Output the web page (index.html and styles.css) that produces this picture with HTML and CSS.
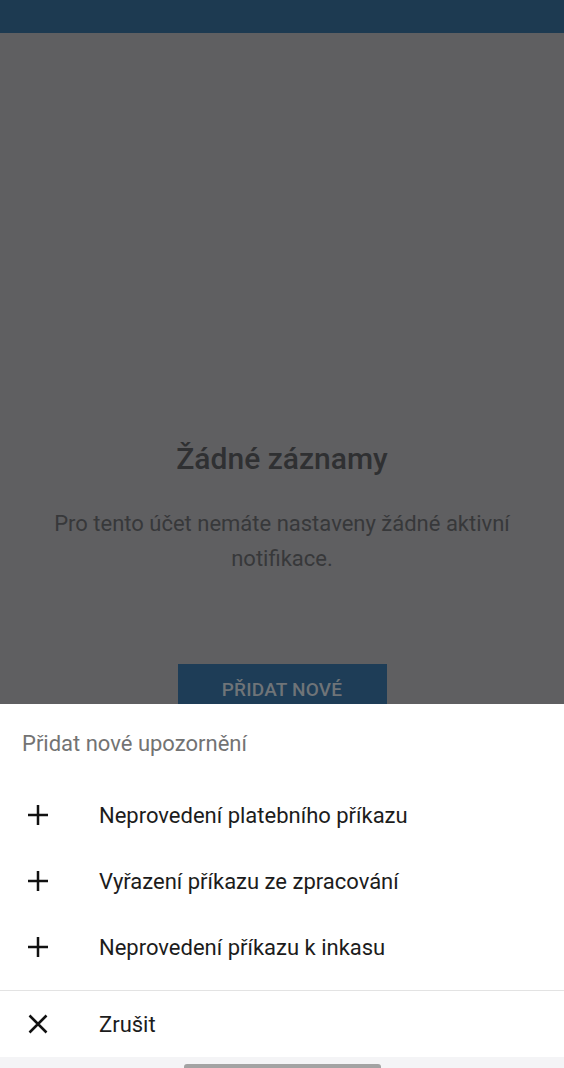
FILE: index.html
```html
<!DOCTYPE html>
<html lang="cs">
<head>
<meta charset="utf-8">
<title>Notifikace</title>
<link rel="stylesheet" href="styles.css">
</head>
<body>
<header class="appbar"></header>
<main class="empty">
  <h1 class="empty-title">Žádné záznamy</h1>
  <p class="empty-text">Pro tento účet nemáte nastaveny žádné aktivní notifikace.</p>
  <button class="add-btn">PŘIDAT NOVÉ</button>
</main>
<section class="sheet">
  <div class="sheet-title">Přidat nové upozornění</div>
  <ul class="sheet-list">
    <li class="sheet-item">
      <svg class="icon" viewBox="0 0 24 24"><path d="M12 2v20M2 12h20"/></svg>
      <span>Neprovedení platebního příkazu</span>
    </li>
    <li class="sheet-item">
      <svg class="icon" viewBox="0 0 24 24"><path d="M12 2v20M2 12h20"/></svg>
      <span>Vyřazení příkazu ze zpracování</span>
    </li>
    <li class="sheet-item">
      <svg class="icon" viewBox="0 0 24 24"><path d="M12 2v20M2 12h20"/></svg>
      <span>Neprovedení příkazu k inkasu</span>
    </li>
  </ul>
  <div class="sheet-cancel sheet-item">
    <svg class="icon" viewBox="0 0 24 24"><path d="M3.5 3.5l17 17M20.5 3.5l-17 17"/></svg>
    <span>Zrušit</span>
  </div>
  <div class="navbar"><div class="handle"></div></div>
</section>
</body>
</html>
```
FILE: styles.css
```css
* { box-sizing: border-box; }
html, body { margin: 0; padding: 0; }
body {
  width: 564px;
  height: 1068px;
  overflow: hidden;
  background: #5f5f61;
  font-family: Roboto, "Noto Sans", "Liberation Sans", sans-serif;
}
.appbar {
  height: 33px;
  background: #1d3a51;
}
.empty {
  display: flex;
  flex-direction: column;
  align-items: center;
  padding-top: 408px;
}
.empty-title {
  margin: 0;
  font-size: 30px;
  line-height: 36px;
  font-weight: 500;
  color: #2f3032;
}
.empty-text {
  margin: 29px 0 0;
  width: 500px;
  text-align: center;
  font-size: 22px;
  line-height: 35px;
  color: #37383a;
}
.add-btn {
  margin-top: 88px;
  width: 209px;
  height: 52px;
  border: 0;
  background: #1e3d57;
  color: #6f7478;
  font-family: inherit;
  font-size: 19px;
  font-weight: 500;
  letter-spacing: 0.2px;
  padding: 0 0 2px;
}
.sheet {
  position: fixed;
  left: 0;
  right: 0;
  top: 704px;
  bottom: 0;
  background: #ffffff;
  display: flex;
  flex-direction: column;
}
.sheet-title {
  height: 78px;
  display: flex;
  align-items: center;
  padding-left: 22px;
  font-size: 22px;
  color: #737373;
}
.sheet-list {
  list-style: none;
  margin: 0;
  padding: 0 0 10px;
  border-bottom: 1px solid #e3e3e3;
}
.sheet-item {
  height: 66px;
  display: flex;
  align-items: center;
  font-size: 22px;
  color: #1c1c1c;
}
.icon {
  width: 24px;
  height: 24px;
  margin: 0 49px 0 26px;
  fill: none;
  stroke: #111;
  stroke-width: 2.5;
  flex: none;
}
.navbar {
  flex: 1;
  background: #f4f4f6;
  display: flex;
  justify-content: center;
  align-items: flex-end;
}
.handle {
  width: 197px;
  height: 4px;
  background: #a3a3a3;
  border-radius: 3px 3px 0 0;
}
```
